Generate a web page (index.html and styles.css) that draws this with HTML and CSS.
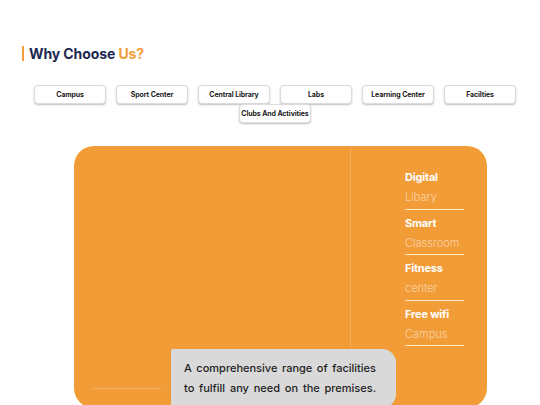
FILE: index.html
```html
<!DOCTYPE html>
<html lang="en">
<head>
<meta charset="utf-8">
<title>Why Choose Us</title>
<link rel="stylesheet" href="styles.css">
</head>
<body>
<section class="why">
  <h2 class="title"><span class="dark">Why Choose</span> <span class="accent">Us?</span></h2>
  <div class="tabs">
    <button class="tab">Campus</button>
    <button class="tab">Sport Center</button>
    <button class="tab">Central Library</button>
    <button class="tab">Labs</button>
    <button class="tab">Learning Center</button>
    <button class="tab">Facilties</button>
    <button class="tab">Clubs And Activities</button>
  </div>
  <div class="card">
    <div class="left">
      <div class="rule"></div>
    </div>
    <div class="right">
      <ul class="features">
        <li><span class="f-title">Digital</span><span class="f-sub">Libary</span></li>
        <li><span class="f-title">Smart</span><span class="f-sub">Classroom</span></li>
        <li><span class="f-title">Fitness</span><span class="f-sub">center</span></li>
        <li><span class="f-title">Free wifi</span><span class="f-sub">Campus</span></li>
      </ul>
    </div>
    <div class="note">A comprehensive range of facilities to fulfill any need on the premises.</div>
  </div>
</section>
</body>
</html>
```
FILE: styles.css
```css
* { box-sizing: border-box; }
html, body { margin: 0; padding: 0; background: #fff; }
body { font-family: Inter, "Liberation Sans", sans-serif; width: 540px; height: 405px; overflow: hidden; }
.why { padding-top: 46px; height: 405px; overflow: hidden; }
.title {
  margin: 0 0 0 22px;
  padding-left: 5px;
  border-left: 2px solid #f29d38;
  font-size: 14px;
  line-height: 15px;
  font-weight: 700;
  letter-spacing: -0.1px;
}
.dark { color: #1c2750; }
.accent { color: #f29d38; }
.tabs {
  display: flex;
  flex-wrap: wrap;
  justify-content: center;
  column-gap: 10px;
  row-gap: 0;
  width: 482px;
  margin: 24px 0 0 34px;
}
.tab {
  width: 72px;
  height: 19px;
  padding: 0;
  background: #fff;
  border: 1px solid #dcdcdc;
  border-radius: 4px;
  box-shadow: 0 1px 2px rgba(0,0,0,0.25);
  font-family: inherit;
  font-size: 7px;
  font-weight: 700;
  color: #1a1a1a;
  white-space: nowrap;
  letter-spacing: -0.1px;
}
.card {
  position: relative;
  margin: 23px 0 0 74px;
  width: 413px;
  height: 262px;
  background: #f29c38;
  border-radius: 20px;
  display: grid;
  grid-template-columns: 277px 1fr;
}
.left {
  border-right: 1px solid rgba(255,255,255,0.18);
  position: relative;
}
.rule {
  position: absolute;
  left: 19px;
  top: 242px;
  width: 68px;
  height: 1px;
  background: rgba(255,255,255,0.25);
}
.right { padding: 24px 0 0 54px; }
.features { list-style: none; margin: 0; padding: 0; width: 59px; }
.features li {
  display: flex;
  flex-direction: column;
  border-bottom: 1.5px solid #fde6c8;
  margin-bottom: 6px;
  height: 39.5px;
}
.f-title {
  color: #fff;
  font-size: 11px;
  font-weight: 700;
  line-height: 14px;
  white-space: nowrap;
  letter-spacing: -0.2px;
}
.f-sub {
  color: rgba(255,255,255,0.55);
  font-size: 11px;
  font-weight: 300;
  line-height: 14px;
  margin-top: 6px;
  white-space: nowrap;
}
.note {
  position: absolute;
  left: 97px;
  top: 203px;
  width: 225px;
  height: 59px;
  background: #d9d9d9;
  border-radius: 2px 14px 14px 0;
  padding: 9px 20px 0 13px;
  font-size: 11px;
  font-weight: 500;
  line-height: 20px;
  color: #1e1e1e;
  text-align: justify;
  text-align-last: justify;
}
```
